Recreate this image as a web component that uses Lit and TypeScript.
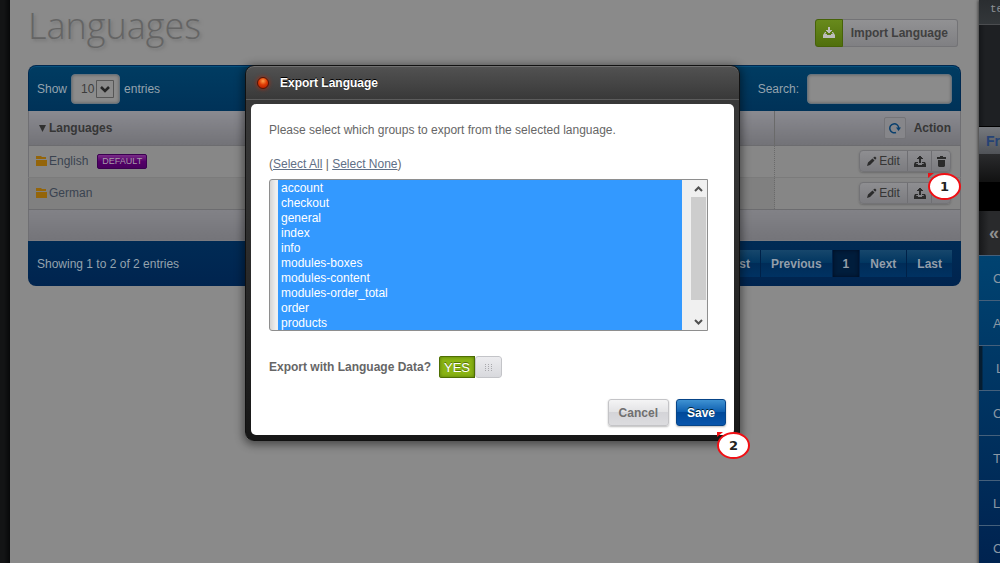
import { LitElement, html, css, svg } from "lit";
import { customElement, property, state } from "lit/decorators.js";

const uploadIcon = svg`<path d="M5 0h2v1h1v1h1v1H7v4H5V3H3V2h1V1h1z"/><path d="M1 6h3v1H2.500L2 8h2v1h4V8h2l-.5-1H8V6h3l1 2v3H0V8z"/>`;
const downloadIcon = svg`<path d="M5 0h2v3h2v1H8v1H7v1H5V5H4V4H3V3h2z"/><path d="M2 5h1v1l-1 1h2v1h4V7h2L9 6V5h1l2 3v3H0V8z"/>`;

@customElement("row-actions")
class RowActions extends LitElement {
  static styles = css`
    .group {
      display: inline-flex;
      vertical-align: middle;
      height: 22px;
      border: 1px solid #737376;
      border-radius: 4px;
      background: linear-gradient(#8e8e91, #7c7c80);
      box-shadow: 0 1px 2px #6c6c6c;
      box-sizing: border-box;
    }
    button {
      display: flex;
      align-items: center;
      justify-content: center;
      gap: 2px;
      width: 24px;
      padding: 0;
      border: 0;
      border-left: 1px solid #6f6f73;
      background: none;
      color: #353535;
      font: 12px "Liberation Sans", Arial, sans-serif;
    }
    button:first-child {
      width: 47px;
      border-left: 0;
    }
    button:last-child {
      width: 19px;
    }
    svg {
      fill: #2b2b2b;
    }
  `;
  render() {
    return html`<div class="group">
      <button>
        <svg width="10" height="10" viewBox="0 0 10 10"><path d="M0 10l1-3.500 4.500-4 2 2L3 9z M6.200 1.800L8 .5 9.500 2 8.200 3.800z" /></svg>Edit
      </button>
      <button aria-label="Export"><svg width="12" height="11" viewBox="0 0 12 11">${uploadIcon}</svg></button>
      <button aria-label="Delete">
        <svg width="9" height="11" viewBox="0 0 9 11"><path d="M3 0h3v1h3v2H0V1h3z M1 4h7v6l-1 1H2l-1-1z" /></svg>
      </button>
    </div>`;
  }
}

@customElement("step-marker")
class StepMarker extends LitElement {
  @property() label = "";
  static styles = css`
    :host {
      display: block;
      width: 33px;
      height: 27px;
    }
    .oval {
      display: grid;
      place-items: center;
      box-sizing: border-box;
      width: 100%;
      height: 100%;
      border: 2px solid #f00f14;
      border-radius: 50%;
      background: #fff;
      color: #222;
      font: bold 13px "DejaVu Sans", Verdana, sans-serif;
    }
    .tip {
      position: absolute;
      top: 0;
      left: 0;
      fill: #f00f14;
    }
  `;
  render() {
    return html`<svg class="tip" width="6" height="5"><path d="M0 0h6L0 5z" /></svg>
      <div class="oval">${this.label}</div>`;
  }
}

@customElement("side-menu")
class SideMenu extends LitElement {
  static styles = css`
    :host {
      display: block;
      overflow: hidden;
      background: #00224f;
      color: #8c9095;
      font: 13px "Liberation Sans", Arial, sans-serif;
      box-shadow: -1px 0 3px #3c3c3c;
      white-space: nowrap;
    }
    .user {
      height: 25px;
      box-sizing: border-box;
      padding: 3px 0 0 11px;
      background: linear-gradient(#2a2d30, #33373a);
      border-bottom: 1px solid #4b4d50;
      font: 11px/13px "Liberation Mono", monospace;
    }
    .info {
      height: 101px;
      background: linear-gradient(90deg, #15171a, #1e2023 6px);
      border-bottom: 1px solid #000;
    }
    .front {
      height: 27px;
      padding-left: 7px;
      background: linear-gradient(#76797e, #505358);
      color: #254275;
      font-weight: bold;
      font-size: 14px;
      line-height: 29px;
    }
    .gloss {
      height: 57px;
      background: linear-gradient(#2a2b2d, #111 50%, #000 50%);
    }
    .collapse {
      height: 44px;
      background: linear-gradient(90deg, #17181a, #292a2c 10px);
      color: #909090;
      font: bold 18px/44px "Liberation Sans", Arial, sans-serif;
      padding-left: 10px;
    }
    nav {
      background: linear-gradient(#004371, #00224f);
    }
    a {
      display: block;
      height: 44px;
      padding-left: 14px;
      border-top: 1px solid #45607b;
      color: #8a98a5;
      line-height: 46px;
      text-decoration: none;
    }
    a.current {
      padding-left: 17px;
      background: linear-gradient(90deg, #061d30 3px, transparent 4px);
    }
  `;
  render() {
    return html`
      <div class="user">te</div>
      <div class="info"></div>
      <div class="front">Fr</div>
      <div class="gloss"></div>
      <div class="collapse">«</div>
      <nav>
        ${["C", "A", "L", "C", "T", "L", "C"].map(
          (item, i) => html`<a href="#" class=${i === 2 ? "current" : ""}>${item}</a>`
        )}
      </nav>
    `;
  }
}

@customElement("export-dialog")
class ExportDialog extends LitElement {
  @state() private all = true;
  private groups = [
    "account", "checkout", "general", "index", "info",
    "modules-boxes", "modules-content", "modules-order_total", "order", "products",
  ];
  static styles = css`
    :host {
      display: block;
      position: relative;
      box-sizing: border-box;
      padding: 0 5px 5px;
      border: 1px solid #111;
      border-radius: 9px;
      background: linear-gradient(#525252, #383838 34px, #333 120px, #171717);
      box-shadow: 0 1px 0 #707070 inset, 0 2px 8px 2px rgba(0, 0, 0, 0.45);
      color: #666;
      font: 12px/16px "Liberation Sans", Arial, sans-serif;
    }
    header {
      display: flex;
      align-items: center;
      gap: 11px;
      height: 33px;
      margin: 0 -5px 4px;
      padding-left: 11px;
      border-bottom: 1px solid #5c5c5c;
    }
    .led {
      width: 10px;
      height: 10px;
      border: 1px solid #5c1200;
      border-radius: 50%;
      background: radial-gradient(circle at 50% 30%, #ffa04a, #e03c05 45%, #a81800);
      box-shadow: 0 0 4px #b02a10;
    }
    h2 {
      margin: 0;
      color: #fff;
      font-size: 12px;
      text-shadow: 0 -1px #000;
    }
    .body {
      padding: 18px 18px 0;
      border-radius: 5px;
      background: #fff;
    }
    p {
      margin: 0 0 18px;
    }
    .links {
      margin-bottom: 7px;
    }
    .links a {
      color: #5f6f86;
    }
    .list {
      position: relative;
      margin-right: 8px;
    }
    .list select {
      display: block;
      box-sizing: border-box;
      width: 100%;
      height: 152px;
      margin: 0;
      padding: 0 25px 0 8px;
      border: 1px solid #8e8e8e;
      border-radius: 3px 0 0 3px;
      outline: 0;
      background: linear-gradient(90deg, #d4d4d4, #efefef 6px);
      font: 12px/15px "Liberation Sans", Arial, sans-serif;
      scrollbar-width: none;
      overflow: hidden;
    }
    option {
      box-sizing: border-box;
      height: 15px;
      min-height: 15px;
      padding: 1px 3px 0;
      line-height: 14px;
    }
    option:checked {
      background: linear-gradient(#39f, #39f);
      -webkit-text-fill-color: #fff;
    }
    .bar {
      position: absolute;
      top: 1px;
      right: 1px;
    }
    .option {
      display: flex;
      align-items: center;
      gap: 8px;
      margin-top: 25px;
      font-weight: bold;
    }
    .toggle {
      position: relative;
      display: flex;
      width: 63px;
      height: 22px;
      border-radius: 3px;
      overflow: hidden;
    }
    .toggle input {
      position: absolute;
      inset: 0;
      width: 100%;
      height: 100%;
      margin: 0;
      opacity: 0;
    }
    .on {
      flex: 1;
      background: #8ab414;
      box-shadow: inset 0 0 4px #3c5a00, inset 0 0 0 1px #5c7d06;
      color: #fff;
      font: 13px/24px "Liberation Sans", Arial, sans-serif;
      text-align: center;
      text-shadow: 0 -1px #55700a;
    }
    .knob {
      display: grid;
      place-items: center;
      box-sizing: border-box;
      width: 27px;
      border: 1px solid #c3c4c8;
      border-radius: 3px;
      background: linear-gradient(#ececef, #d8d9dd);
    }
    footer {
      display: flex;
      justify-content: flex-end;
      gap: 7px;
      padding: 21px 0 9px;
      margin-right: -10px;
    }
    footer button {
      height: 27px;
      padding: 0 10px;
      border: 1px solid #c4c4c7;
      border-radius: 3px;
      background: linear-gradient(#f4f4f5, #e2e2e4 50%, #d4d4d8 50%, #dcdcdf);
      box-shadow: 0 1px 2px #bbb;
      color: #707070;
      font: bold 12px "Liberation Sans", Arial, sans-serif;
    }
    footer .save {
      border-color: #064488;
      background: linear-gradient(#3f92d2, #0b5cae 50%, #00499a 50%, #0855ac);
      color: #fff;
      text-shadow: 0 -1px #023;
    }
    step-marker {
      position: absolute;
      right: -11px;
      bottom: -19px;
    }
  `;
  private pick(e: Event, all: boolean) {
    e.preventDefault();
    this.all = all;
  }
  render() {
    return html`
      <header><span class="led"></span><h2 id="title">Export Language</h2></header>
      <div class="body">
        <p>Please select which groups to export from the selected language.</p>
        <p class="links">(<a href="#" @click=${(e: Event) => this.pick(e, true)}>Select All</a> | <a href="#" @click=${(e: Event) => this.pick(e, false)}>Select None</a>)</p>
        <div class="list">
          <select multiple size="10" aria-label="Groups">
            ${this.groups.map((g) => html`<option .selected=${this.all}>${g}</option>`)}
          </select>
          <svg class="bar" width="17" height="150" viewBox="0 0 17 150">
            <path fill="#f0f0f0" d="M0 0h17v150H0z" />
            <path fill="#cdcdcd" d="M1 17h15v103H1z" />
            <path fill="none" stroke="#505050" stroke-width="2" d="M5 11l3.500-3.500L12 11M5 140l3.500 3.500L12 140" />
          </svg>
        </div>
        <div class="option">
          <label for="data">Export with Language Data?</label>
          <span class="toggle">
            <span class="on">YES</span>
            <span class="knob">
              <svg width="7" height="7" fill="#a9a9ad">
                ${[0, 2, 4, 6].map((y) => [0, 3, 6].map((x) => svg`<rect x=${x} y=${y} width="1" height="1"/>`))}
              </svg>
            </span>
            <input id="data" type="checkbox" checked />
          </span>
        </div>
        <footer><button>Cancel</button><button class="save">Save</button></footer>
      </div>
      <step-marker label="2"></step-marker>
    `;
  }
}

@customElement("app-root")
class AppRoot extends LitElement {
  static styles = css`
    :host {
      display: block;
      position: relative;
      height: 100vh;
      overflow: hidden;
      background: #8a8a8a;
      color: #3a4350;
      font: 12px/16px "Liberation Sans", Arial, sans-serif;
    }
    .page {
      display: grid;
      grid-template-columns: 10px 1fr 21px;
      min-height: 100%;
    }
    .edge {
      background: linear-gradient(90deg, #131415, #131415 4px, #070809);
    }
    main {
      padding: 0 18px;
    }
    .top {
      display: flex;
      align-items: center;
      justify-content: space-between;
      height: 65px;
      padding-right: 3px;
    }
    h1 {
      margin: 0 0 14px;
      color: #646464;
      font: 300 36px/50px "Open Sans", sans-serif;
      text-shadow: 2px 2px 3px #777;
    }
    .import {
      display: flex;
      height: 28px;
      padding: 0;
      border: 0;
      border-radius: 3px;
      background: linear-gradient(#929294, #7f7f82);
      box-shadow: inset 0 0 0 1px #737376;
      color: #404040;
      font: bold 12px/28px "Liberation Sans", Arial, sans-serif;
    }
    .import .icon {
      display: grid;
      place-items: center;
      box-sizing: border-box;
      width: 28px;
      height: 28px;
      border: 1px solid #466208;
      border-radius: 3px 0 0 3px;
      background: linear-gradient(#688a1c, #506f0c);
      fill: #bdbdbd;
    }
    .import .text {
      padding: 0 10px 0 8px;
    }
    .bar {
      display: flex;
      align-items: center;
      justify-content: space-between;
      box-sizing: border-box;
      padding: 0 9px;
      color: #95a3ae;
    }
    .bar.head {
      height: 46px;
      border: 1px solid #002950;
      border-bottom: 0;
      border-radius: 8px 8px 0 0;
      background: linear-gradient(#003c62, #003258);
      box-shadow: inset 0 1px #07507c;
      padding: 0 8px;
    }
    .bar.foot {
      height: 45px;
      border-radius: 0 0 8px 8px;
      background: linear-gradient(#002b55, #00244f);
    }
    .length,
    .search {
      display: flex;
      align-items: center;
    }
    .length {
      gap: 4px;
    }
    .search {
      gap: 8px;
    }
    .field {
      position: relative;
    }
    .field svg {
      position: absolute;
      right: 6px;
      top: 6px;
    }
    select,
    input {
      display: block;
      box-sizing: border-box;
      height: 30px;
      margin: 0;
      border: 1px solid #67737d;
      border-radius: 4px;
      background: #8b8b8b;
      box-shadow: inset 0 0 3px #5f5f5f;
      color: #3c3c3c;
      font: 12px "Liberation Sans", Arial, sans-serif;
    }
    select {
      appearance: none;
      width: 49px;
      padding: 0 0 0 9px;
    }
    input {
      width: 145px;
    }
    table {
      width: 100%;
      border-collapse: collapse;
      table-layout: fixed;
      border-right: 1px solid #6f6f73;
      border-left: 1px solid #6f6f73;
    }
    th,
    td {
      box-sizing: border-box;
      height: 32px;
      padding: 0 8px;
      text-align: left;
    }
    th {
      height: 34px;
      border-bottom: 1px solid #6c6c6f;
      background: linear-gradient(#8a8a90, #727277);
      color: #363636;
    }
    th:first-child,
    td:first-child {
      padding-left: 7px;
    }
    th:last-child,
    td:last-child {
      width: 186px;
      border-left: 1px dotted #6a6a6a;
      text-align: right;
      padding-right: 9px;
    }
    th:last-child {
      border-left-style: solid;
    }
    .odd td {
      background: #878787;
      border-bottom: 1px solid #7b7b7b;
    }
    .even td {
      background: #808080;
      border-bottom: 1px solid #6c6c6f;
    }
    .even .plain {
      background: #868686;
    }
    tfoot td {
      background: linear-gradient(#828287, #747479);
    }
    tfoot td:last-child {
      border-left: 0;
      padding: 0;
    }
    .name,
    .action {
      display: flex;
      align-items: center;
    }
    .action {
      justify-content: flex-end;
      gap: 8px;
    }
    .name svg {
      margin-right: 2px;
    }
    .refresh {
      display: grid;
      place-items: center;
      width: 22px;
      height: 22px;
      padding: 0;
      border: 1px solid #747478;
      border-radius: 2px;
      background: #86868a;
    }
    .tag {
      margin-left: 9px;
      padding: 0 4px;
      border: 1px solid #3b0050;
      border-radius: 2px;
      background: linear-gradient(#7a2c88, #540069 50%, #49005e);
      color: #a59aa8;
      font-size: 9px;
      line-height: 13px;
    }
    .spot {
      position: relative;
    }
    .spot step-marker {
      position: absolute;
      top: -9px;
      right: -10px;
    }
    .pager {
      display: flex;
    }
    .pager button {
      height: 27px;
      padding: 0 10px;
      border: 0;
      border-right: 1px solid #002148;
      background: linear-gradient(#17476c, #003560 50%, #002c58 50%, #003262);
      color: #939eaa;
      font: bold 12px "Liberation Sans", Arial, sans-serif;
    }
    .pager button:last-child {
      border-right: 0;
    }
    .pager .now {
      background: #001d3c;
      box-shadow: inset 0 0 4px #000c20;
    }
    .overlay {
      position: absolute;
      inset: 0;
      display: flex;
      align-items: flex-start;
      justify-content: center;
      padding: 65px 15px 0 0;
    }
    export-dialog {
      width: 495px;
      max-width: 100%;
    }
  `;
  private folder = html`<svg width="11" height="10" viewBox="0 0 11 10" fill="#94650a"><path d="M0 0h5l1 1h4v2H0zM0 4h11v6H0z" /></svg>`;

  render() {
    return html`
      <div class="page">
        <div class="edge"></div>
        <main>
          <div class="top">
            <h1>Languages</h1>
            <button class="import">
              <span class="icon"><svg width="12" height="11" viewBox="0 0 12 11">${downloadIcon}</svg></span>
              <span class="text">Import Language</span>
            </button>
          </div>
          <section>
            <div class="bar head">
              <div class="length">
                <label for="len">Show</label>
                <span class="field">
                  <select id="len"><option>10</option></select>
                  <svg width="18" height="18" viewBox="0 0 18 18" fill="none">
                    <path stroke="#565656" d="M.5.5h17v17H.5z" />
                    <path stroke="#262626" stroke-width="2.500" d="M5 7l4 4 4-4" />
                  </svg>
                </span>
                <span>entries</span>
              </div>
              <div class="search"><label for="q">Search:</label><input id="q" type="text" /></div>
            </div>
            <table>
              <thead>
                <tr>
                  <th>
                    <div class="name"><svg width="11" height="8" viewBox="0 0 11 8" fill="#303030"><path d="M3 1h7L6.500 8z" /></svg>Languages</div>
                  </th>
                  <th>
                    <div class="action">
                      <button class="refresh" aria-label="Refresh">
                        <svg width="12" height="12" viewBox="0 0 12 12"><path fill="none" stroke="#0a406e" stroke-width="1.500" d="M7 10.500A4.500 4.500 0 1 1 9.800 6" /><path fill="#0a406e" d="M7 5.500h5L9.500 9z" /></svg>
                      </button>
                      Action
                    </div>
                  </th>
                </tr>
              </thead>
              <tbody>
                <tr class="odd">
                  <td><div class="name">${this.folder}English<span class="tag">DEFAULT</span></div></td>
                  <td><row-actions></row-actions></td>
                </tr>
                <tr class="even">
                  <td><div class="name">${this.folder}German</div></td>
                  <td class="plain">
                    <div class="spot"><row-actions></row-actions><step-marker label="1"></step-marker></div>
                  </td>
                </tr>
              </tbody>
              <tfoot>
                <tr><td colspan="2"></td></tr>
              </tfoot>
            </table>
            <div class="bar foot">
              <span>Showing 1 to 2 of 2 entries</span>
              <div class="pager">
                <button>First</button><button>Previous</button><button class="now">1</button><button>Next</button><button>Last</button>
              </div>
            </div>
          </section>
        </main>
        <side-menu></side-menu>
      </div>
      <div class="overlay"><export-dialog role="dialog" aria-label="Export Language"></export-dialog></div>
    `;
  }
}
